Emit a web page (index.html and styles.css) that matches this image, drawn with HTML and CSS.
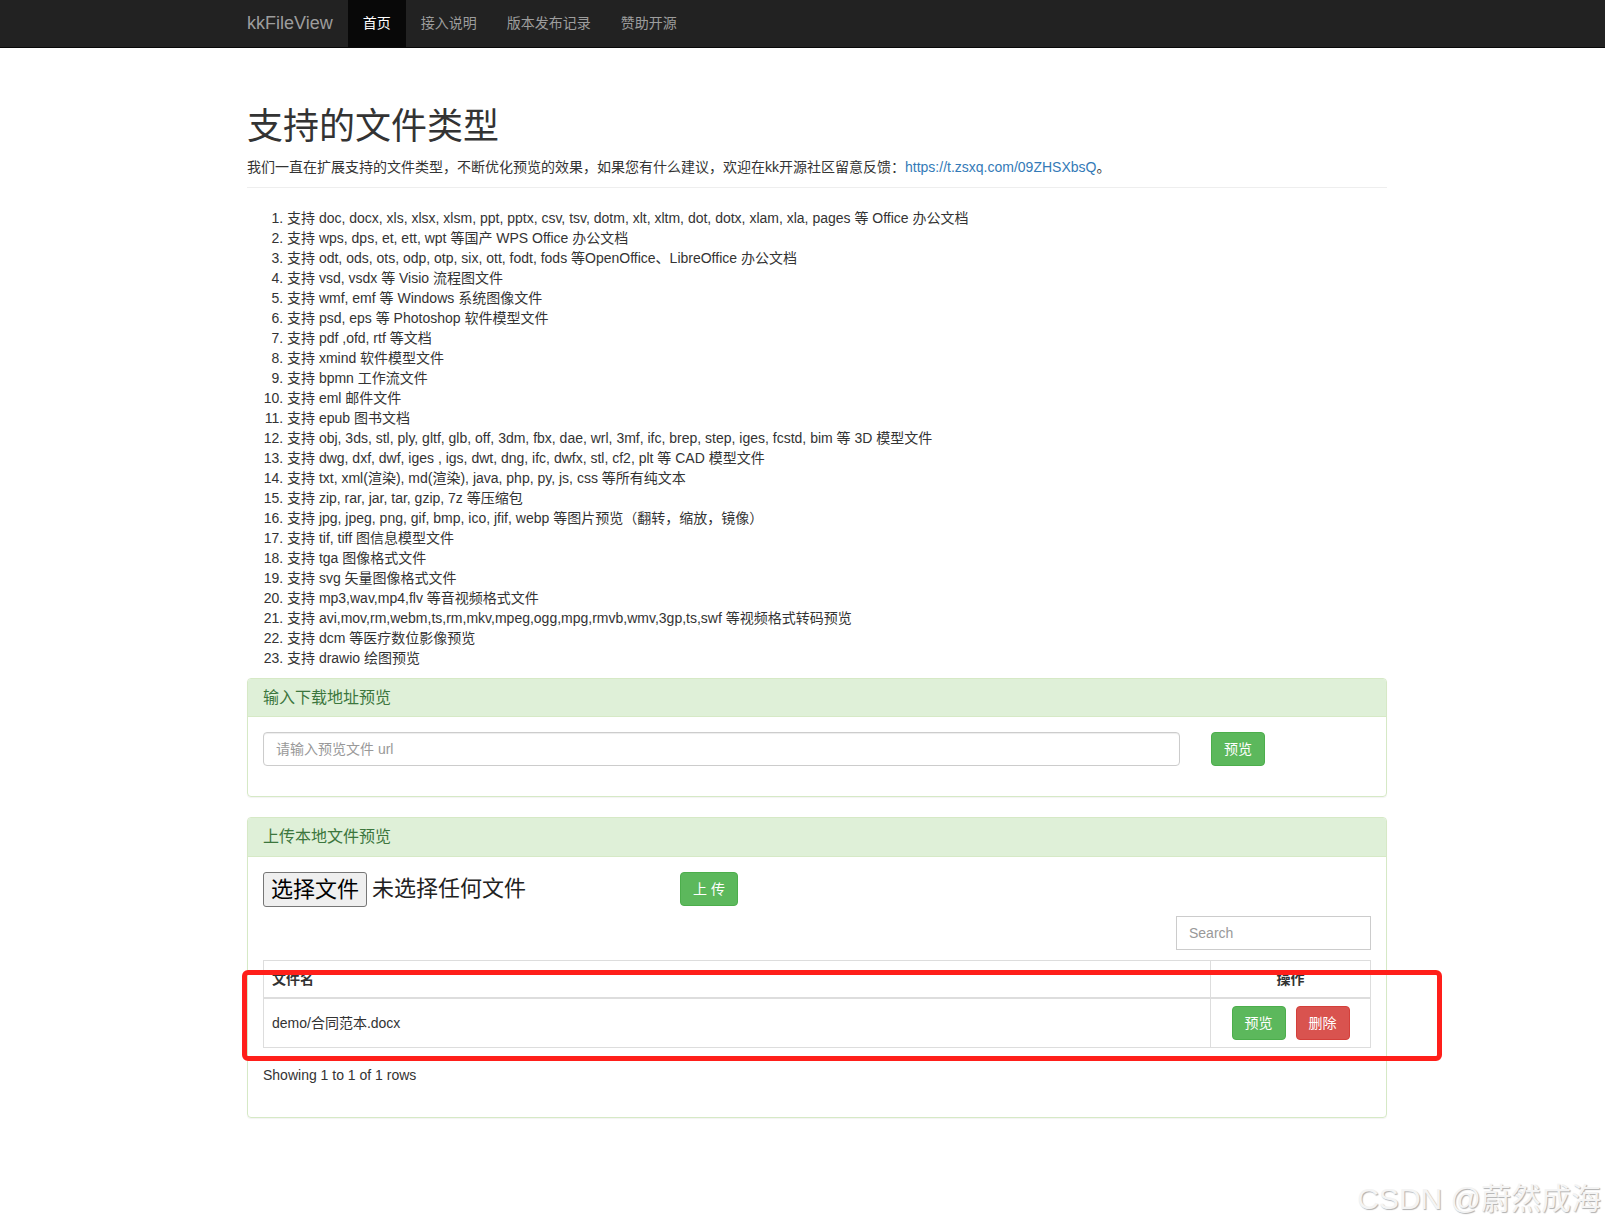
FILE: index.html
```html
<!DOCTYPE html>
<html lang="zh-CN">
<head>
  <meta charset="UTF-8" />
  <meta name="viewport" content="width=device-width, initial-scale=1" />
  <title>kkFileView</title>
  <link rel="stylesheet" href="styles.css">
</head>
<body>

<nav class="navbar">
  <div class="container navbar-inner">
    <a href="#" class="brand">kkFileView</a>
    <ul class="nav">
      <li class="active"><a href="#">首页</a></li>
      <li><a href="#">接入说明</a></li>
      <li><a href="#">版本发布记录</a></li>
      <li><a href="#">赞助开源</a></li>
    </ul>
  </div>
</nav>

<div class="container">
  <div class="page-header">
    <h1>支持的文件类型</h1>
    <p>我们一直在扩展支持的文件类型，不断优化预览的效果，如果您有什么建议，欢迎在kk开源社区留意反馈：<a href="#">https://t.zsxq.com/09ZHSXbsQ</a>。</p>
  </div>

  <ol class="types">
    <li>支持 doc, docx, xls, xlsx, xlsm, ppt, pptx, csv, tsv, dotm, xlt, xltm, dot, dotx, xlam, xla, pages 等 Office 办公文档</li>
    <li>支持 wps, dps, et, ett, wpt 等国产 WPS Office 办公文档</li>
    <li>支持 odt, ods, ots, odp, otp, six, ott, fodt, fods 等OpenOffice、LibreOffice 办公文档</li>
    <li>支持 vsd, vsdx 等 Visio 流程图文件</li>
    <li>支持 wmf, emf 等 Windows 系统图像文件</li>
    <li>支持 psd, eps 等 Photoshop 软件模型文件</li>
    <li>支持 pdf ,ofd, rtf 等文档</li>
    <li>支持 xmind 软件模型文件</li>
    <li>支持 bpmn 工作流文件</li>
    <li>支持 eml 邮件文件</li>
    <li>支持 epub 图书文档</li>
    <li>支持 obj, 3ds, stl, ply, gltf, glb, off, 3dm, fbx, dae, wrl, 3mf, ifc, brep, step, iges, fcstd, bim 等 3D 模型文件</li>
    <li>支持 dwg, dxf, dwf, iges , igs, dwt, dng, ifc, dwfx, stl, cf2, plt 等 CAD 模型文件</li>
    <li>支持 txt, xml(渲染), md(渲染), java, php, py, js, css 等所有纯文本</li>
    <li>支持 zip, rar, jar, tar, gzip, 7z 等压缩包</li>
    <li>支持 jpg, jpeg, png, gif, bmp, ico, jfif, webp 等图片预览（翻转，缩放，镜像）</li>
    <li>支持 tif, tiff 图信息模型文件</li>
    <li>支持 tga 图像格式文件</li>
    <li>支持 svg 矢量图像格式文件</li>
    <li>支持 mp3,wav,mp4,flv 等音视频格式文件</li>
    <li>支持 avi,mov,rm,webm,ts,rm,mkv,mpeg,ogg,mpg,rmvb,wmv,3gp,ts,swf 等视频格式转码预览</li>
    <li>支持 dcm 等医疗数位影像预览</li>
    <li>支持 drawio 绘图预览</li>
  </ol>

  <div class="panel">
    <div class="panel-heading">
      <h3 class="panel-title">输入下载地址预览</h3>
    </div>
    <div class="panel-body">
      <form class="url-form">
        <input type="text" class="form-control url-input" placeholder="请输入预览文件 url" />
        <button type="button" class="btn btn-success">预览</button>
      </form>
    </div>
  </div>

  <div class="panel">
    <div class="panel-heading">
      <h3 class="panel-title">上传本地文件预览</h3>
    </div>
    <div class="panel-body">
      <form class="upload-form">
        <div class="file-picker">
          <span class="file-btn">选择文件</span>
          <span class="file-name">未选择任何文件</span>
        </div>
        <button type="button" class="btn btn-success">上 传</button>
      </form>

      <div class="table-toolbar">
        <input type="text" class="form-control search" placeholder="Search" />
      </div>

      <table class="table">
        <thead>
          <tr>
            <th>文件名</th>
            <th class="col-action">操作</th>
          </tr>
        </thead>
        <tbody>
          <tr>
            <td>demo/合同范本.docx</td>
            <td class="col-action">
              <div class="actions">
                <button type="button" class="btn btn-success">预览</button>
                <button type="button" class="btn btn-danger">删除</button>
              </div>
            </td>
          </tr>
        </tbody>
      </table>

      <div class="pagination-info">Showing 1 to 1 of 1 rows</div>
    </div>
  </div>
</div>

<div class="mark-box"></div>
<div class="watermark">CSDN @蔚然成海</div>

</body>
</html>
```

FILE: styles.css
```css
body {
  margin: 0;
  position: relative;
  min-height: 1228px;
  background-color: #fff;
  color: #333;
  font-family: "Liberation Sans", "Noto Sans CJK SC", sans-serif;
  font-size: 14px;
  line-height: 20px;
}
a {
  color: #337ab7;
  text-decoration: none;
}
.container {
  width: 1140px;
  padding: 0 15px;
  margin-left: 232px;
}

/* navbar */
.navbar {
  background-color: #222;
  border-bottom: 1px solid #080808;
  height: 47px;
}
.navbar-inner {
  display: flex;
}
.brand {
  margin-left: -15px;
  padding: 13px 15px 14px;
  color: #9d9d9d;
  font-size: 18px;
  line-height: 20px;
}
.nav {
  display: flex;
  margin: 0;
  padding: 0;
  list-style: none;
}
.nav a {
  display: block;
  padding: 13px 15px 14px;
  color: #9d9d9d;
  line-height: 20px;
}
.nav .active a {
  background-color: #080808;
  color: #fff;
}

/* header */
.page-header {
  margin: 59px 0 20px;
  border-bottom: 1px solid #eee;
}
.page-header h1 {
  margin: 0 0 10px;
  font-size: 36px;
  font-weight: 400;
  line-height: 39.6px;
}
.page-header p {
  margin: 0 0 10px;
}

.types {
  margin: 0 0 10px;
  padding-left: 40px;
}

/* panels */
.panel {
  margin-bottom: 20px;
  border: 1px solid #d6e9c6;
  border-radius: 4px;
  box-shadow: 0 1px 1px rgba(0, 0, 0, .05);
}
.panel-heading {
  padding: 10px 15px;
  background-color: #dff0d8;
  border-bottom: 1px solid #d6e9c6;
  border-radius: 3px 3px 0 0;
  color: #3c763d;
}
.panel-title {
  margin: 0;
  font-size: 16px;
  font-weight: 400;
  line-height: 17.6px;
}
.panel-body {
  padding: 15px;
}

.form-control {
  box-sizing: border-box;
  height: 34px;
  padding: 6px 12px;
  border: 1px solid #ccc;
  border-radius: 4px;
  box-shadow: inset 0 1px 1px rgba(0, 0, 0, .075);
  color: #555;
  font-family: inherit;
  font-size: 14px;
}
.form-control::placeholder {
  color: #999;
}

.btn {
  box-sizing: border-box;
  height: 34px;
  padding: 6px 12px;
  border: 1px solid transparent;
  border-radius: 4px;
  color: #fff;
  font-family: inherit;
  font-size: 14px;
  line-height: 20px;
  cursor: pointer;
}
.btn-success {
  background-color: #5cb85c;
  border-color: #4cae4c;
}
.btn-danger {
  background-color: #d9534f;
  border-color: #d43f3a;
}

.url-form {
  display: flex;
  margin: 0;
  padding-bottom: 15px;
}
.url-input {
  width: 917px;
  margin-right: 31px;
}

.upload-form {
  display: flex;
  align-items: flex-start;
  margin: 0;
}
.file-picker {
  display: flex;
  align-items: center;
  width: 417px;
  font-size: 22px;
  line-height: 26px;
}
.file-btn {
  box-sizing: border-box;
  height: 35px;
  padding: 4px 7px;
  background-color: #efefef;
  border: 1px solid #767676;
  border-radius: 3px;
  color: #000;
}
.file-name {
  margin-left: 5px;
  color: #222;
}

.table-toolbar {
  display: flex;
  justify-content: flex-end;
  margin: 9px 0 10px;
}
.search {
  width: 195px;
  border-radius: 0;
  box-shadow: none;
}

.table {
  width: 100%;
  border-collapse: collapse;
  border: 1px solid #ddd;
}
.table th,
.table td {
  padding: 8px;
  border: 1px solid #ddd;
  text-align: left;
  vertical-align: middle;
}
.table th {
  border-bottom-width: 2px;
  font-weight: bold;
}
.table td {
  padding: 7px 8px;
}
.table .col-action {
  width: 143px;
  text-align: center;
}
.actions {
  display: flex;
  justify-content: center;
  gap: 10px;
}

.pagination-info {
  margin: 10px 0;
  line-height: 34px;
}

/* screenshot annotations */
.mark-box {
  position: absolute;
  left: 242px;
  top: 970px;
  width: 1200px;
  height: 91px;
  box-sizing: border-box;
  border: 5px solid #ff1f1a;
  border-radius: 6px;
}
.watermark {
  position: absolute;
  right: 4px;
  top: 1181px;
  color: #f4f4f4;
  font-size: 30px;
  line-height: 36px;
  text-shadow: 1px 1px 1px #b0b0b0;
}
```
